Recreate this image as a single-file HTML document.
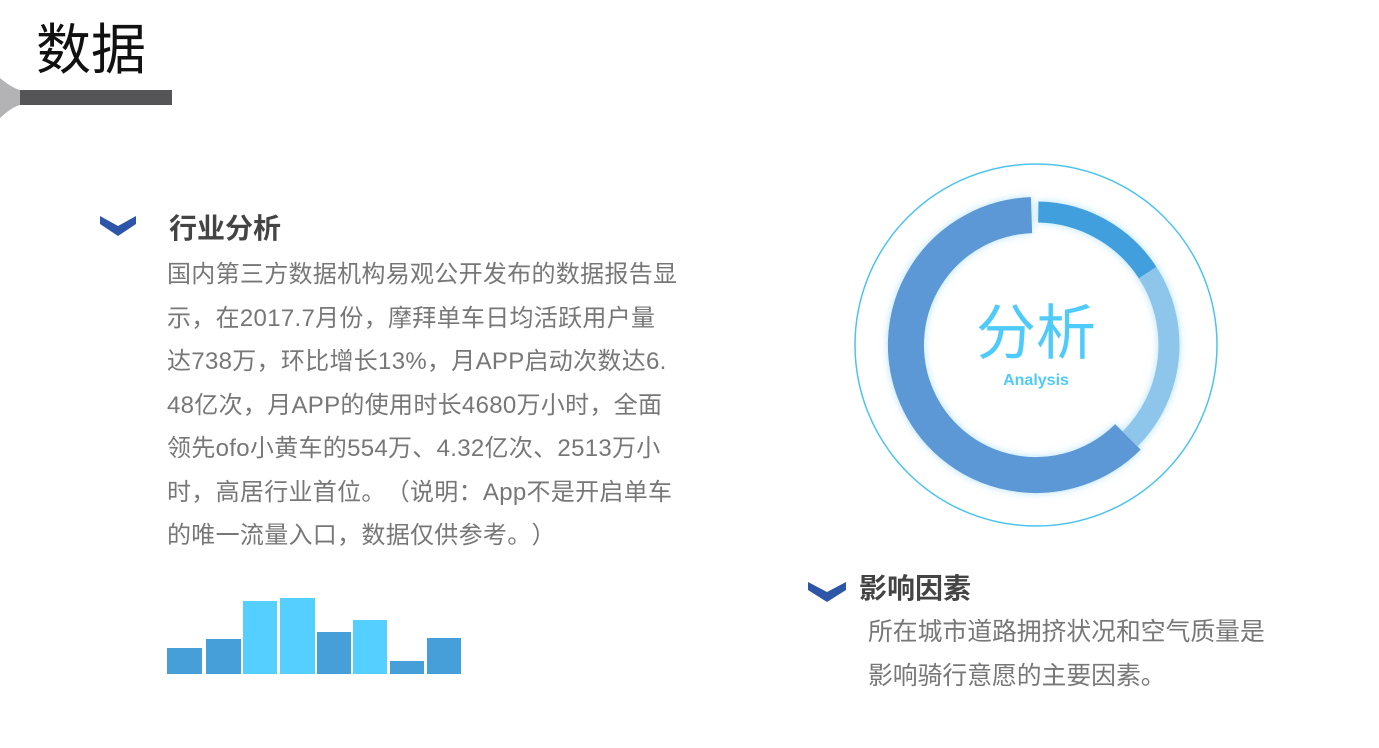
<!DOCTYPE html>
<html><head><meta charset="utf-8"><style>
html,body{margin:0;padding:0;}
body{width:1379px;height:748px;background:#fff;position:relative;overflow:hidden;font-family:"Liberation Sans","Noto Sans CJK SC",sans-serif;text-spacing-trim:space-all;}
.abs{position:absolute;white-space:nowrap;}
.title{left:36px;top:18px;font-size:55px;color:#111;line-height:64px;}
.h{font-size:28px;font-weight:bold;color:#444;line-height:36px;}
.body1{left:167px;top:253px;font-size:24px;line-height:43.5px;color:#777;letter-spacing:0.3px;}
.body2{left:868px;top:611px;font-size:24.8px;line-height:44px;color:#777;}
.bar{position:absolute;bottom:74px;}
</style></head><body>
<div class="abs title">数据</div>
<svg class="abs" style="left:0;top:0" width="180" height="130">
<path d="M0 78 Q12 88 20 90 L20 105 Q12 107 0 118 Z" fill="#b3b3b5"/>
<rect x="20" y="90" width="152" height="15" fill="#555558"/>
</svg>

<svg class="abs" style="left:100px;top:214px" width="36" height="24"><path d="M0 2 L18 12 L36 2 L36 10 L18 22 L0 10 Z" fill="#2d55a8"/></svg>
<div class="abs h" style="left:169px;top:211px">行业分析</div>
<div class="abs body1">国内第三方数据机构易观公开发布的数据报告显<br>示，在2017.7月份，摩拜单车日均活跃用户量<br>达738万，环比增长13%，月APP启动次数达6.<br>48亿次，月APP的使用时长4680万小时，全面<br>领先ofo小黄车的554万、4.32亿次、2513万小<br>时，高居行业首位。（说明：App不是开启单车<br>的唯一流量入口，数据仅供参考。）</div>

<div class="bar" style="left:167px;width:35px;height:26px;background:#469fd9"></div>
<div class="bar" style="left:206px;width:35px;height:35px;background:#469fd9"></div>
<div class="bar" style="left:243px;width:34px;height:73px;background:#55cfff"></div>
<div class="bar" style="left:280px;width:35px;height:76px;background:#55cfff"></div>
<div class="bar" style="left:317px;width:34px;height:42px;background:#469fd9"></div>
<div class="bar" style="left:353px;width:34px;height:54px;background:#55cfff"></div>
<div class="bar" style="left:390px;width:34px;height:13px;background:#469fd9"></div>
<div class="bar" style="left:427px;width:34px;height:36px;background:#469fd9"></div>

<svg class="abs" style="left:0;top:0" width="1379" height="560">
<defs><filter id="g" x="-20%" y="-20%" width="140%" height="140%"><feDropShadow dx="0" dy="0" stdDeviation="4" flood-color="#8fd3f5" flood-opacity="0.7"/></filter></defs>
<circle cx="1036" cy="345" r="181" fill="none" stroke="#4cc3ef" stroke-width="1.5"/>
<g filter="url(#g)">
<path d="M1127.9 436.9 A130 130 0 1 1 1031.5 215.1" fill="none" stroke="#5b97d6" stroke-width="36"/>
<path d="M1038.3 212 A133 133 0 0 1 1147.6 272.6" fill="none" stroke="#3f9fdc" stroke-width="21"/>
<path d="M1147.6 272.6 A133 133 0 0 1 1130 439" fill="none" stroke="#8ec5ea" stroke-width="21"/>
</g>
<text x="1036" y="354" text-anchor="middle" font-size="60" fill="#4fcbfb" font-family="Liberation Sans,Noto Sans CJK SC,sans-serif">分析</text>
<text x="1036" y="385" text-anchor="middle" font-size="16" font-weight="bold" fill="#4fcbfb" font-family="Liberation Sans,sans-serif">Analysis</text>
</svg>

<svg class="abs" style="left:808px;top:580px" width="38" height="24"><path d="M0 2 L19 12 L38 2 L38 10 L19 22 L0 10 Z" fill="#2d55a8"/></svg>
<div class="abs h" style="left:859px;top:571px">影响因素</div>
<div class="abs body2">所在城市道路拥挤状况和空气质量是<br>影响骑行意愿的主要因素。</div>
</body></html>
